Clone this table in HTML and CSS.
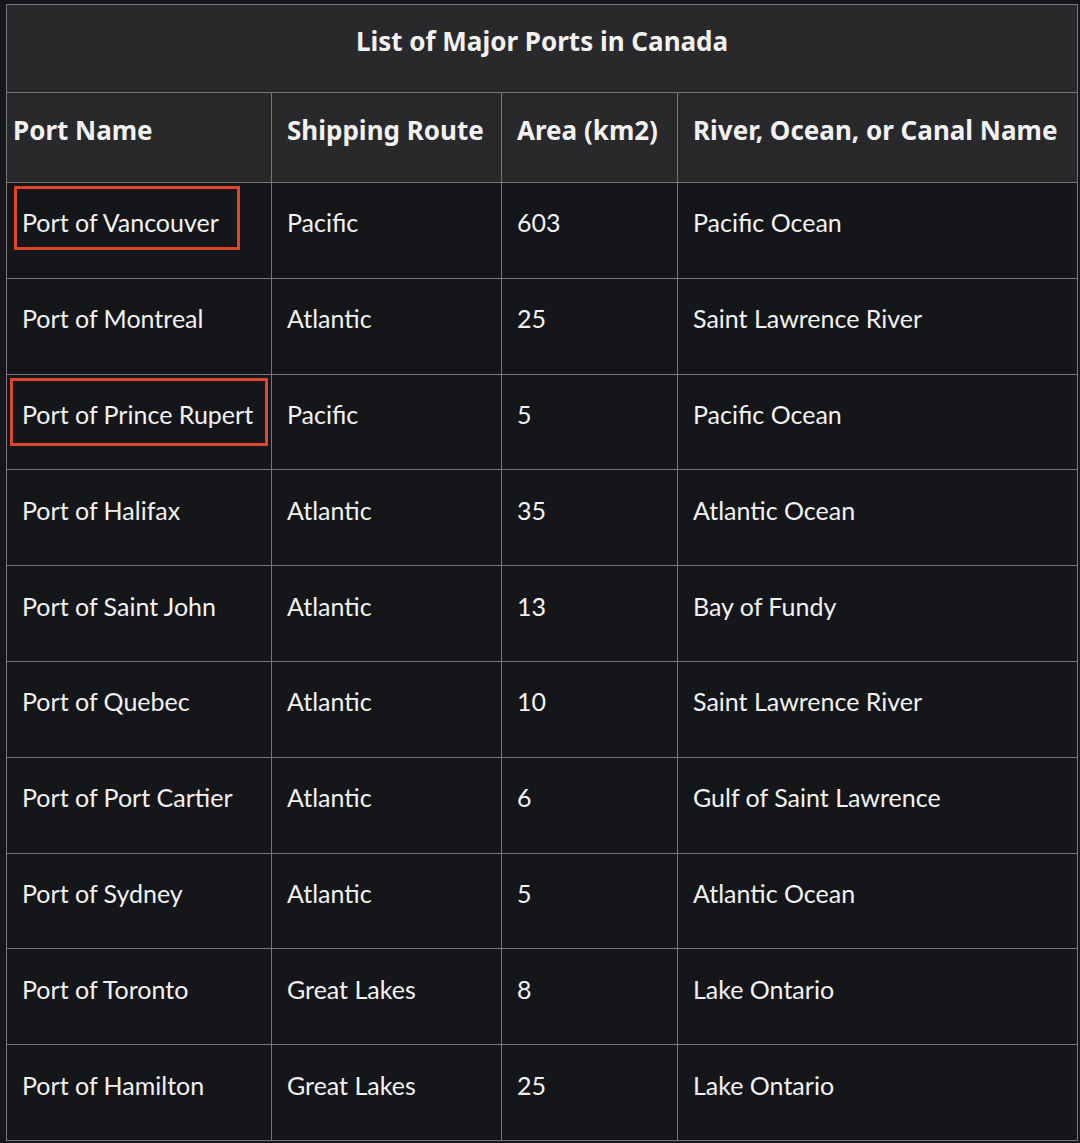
FILE: index.html
```html
<!DOCTYPE html>
<html>
<head>
<meta charset="utf-8">
<link rel="stylesheet" href="styles.css">
</head>
<body>
<table class="ports">
  <colgroup>
    <col class="c1"><col class="c2"><col class="c3"><col class="c4">
  </colgroup>
  <thead>
    <tr class="title-row"><th colspan="4" class="title">List of Major Ports in Canada</th></tr>
    <tr class="head-row">
      <th class="first">Port Name</th>
      <th>Shipping Route</th>
      <th>Area (km2)</th>
      <th>River, Ocean, or Canal Name</th>
    </tr>
  </thead>
  <tbody>
    <tr><td><span class="mark mark-a">Port of Vancouver</span></td><td>Pacific</td><td>603</td><td>Pacific Ocean</td></tr>
    <tr><td>Port of Montreal</td><td>Atlantic</td><td>25</td><td>Saint Lawrence River</td></tr>
    <tr><td><span class="mark mark-b">Port of Prince Rupert</span></td><td>Pacific</td><td>5</td><td>Pacific Ocean</td></tr>
    <tr><td>Port of Halifax</td><td>Atlantic</td><td>35</td><td>Atlantic Ocean</td></tr>
    <tr><td>Port of Saint John</td><td>Atlantic</td><td>13</td><td>Bay of Fundy</td></tr>
    <tr><td>Port of Quebec</td><td>Atlantic</td><td>10</td><td>Saint Lawrence River</td></tr>
    <tr><td>Port of Port Cartier</td><td>Atlantic</td><td>6</td><td>Gulf of Saint Lawrence</td></tr>
    <tr><td>Port of Sydney</td><td>Atlantic</td><td>5</td><td>Atlantic Ocean</td></tr>
    <tr><td>Port of Toronto</td><td>Great Lakes</td><td>8</td><td>Lake Ontario</td></tr>
    <tr><td>Port of Hamilton</td><td>Great Lakes</td><td>25</td><td>Lake Ontario</td></tr>
  </tbody>
</table>
</body>
</html>
```

FILE: styles.css
```css
html, body {
  margin: 0;
  background: #16171a;
}
body {
  padding: 4px 0 0 6px;
  font-family: "Lato", "Noto Sans", sans-serif;
  color: #f2f2f2;
}
.ports {
  border-collapse: collapse;
  table-layout: fixed;
  width: 1071px;
  border: 1px solid #8c8c8e;
}
.c1 { width: 265px; }
.c2 { width: 230px; }
.c3 { width: 176px; }
.c4 { width: 400px; }
.ports th, .ports td {
  border: 1px solid #77777a;
  text-align: left;
  padding: 0 0 14px 15px;
  white-space: nowrap;
}
.ports thead th {
  background: #29292c;
  font-family: "Noto Sans", "Lato", sans-serif;
  font-weight: 700;
  font-size: 26px;
}
.title-row th {
  height: 71px;
  text-align: center;
  padding: 0 0 16px 0;
  font-size: 25px;
}
.head-row th {
  height: 73px;
  padding-bottom: 16px;
}
.head-row th.first {
  padding-left: 6px;
}
.ports tbody td {
  background: #151619;
  height: 78.8px;
  padding-bottom: 16px;
  font-size: 25px;
  font-weight: 400;
}
.mark {
  position: relative;
  display: inline-block;
  line-height: 30px;
}
.mark::before {
  content: "";
  position: absolute;
  border: 3px solid #e0452c;
  box-sizing: border-box;
}
.mark-a::before {
  left: -8px;
  width: 226px;
  top: -21px;
  height: 64px;
}
.mark-b::before {
  left: -12px;
  width: 258px;
  top: -21px;
  height: 68px;
}
```
